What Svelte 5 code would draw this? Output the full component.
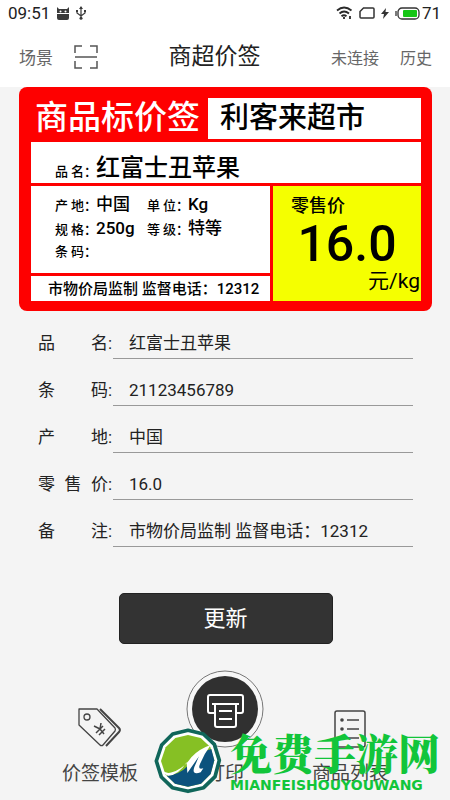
<script lang="ts">
  type Field = { id: string; label: string; value: string };

  let fields: Field[] = $state([
    { id: "name", label: "品名", value: "红富士丑苹果" },
    { id: "barcode", label: "条码", value: "21123456789" },
    { id: "origin", label: "产地", value: "中国" },
    { id: "price", label: "零售价", value: "16.0" },
    { id: "remark", label: "备注", value: "市物价局监制 监督电话：12312" },
  ]);

  const details = [
    { label: "产地", value: "中国" },
    { label: "单位", value: "Kg" },
    { label: "规格", value: "250g" },
    { label: "等级", value: "特等" },
    { label: "条码", value: "" },
  ];
</script>

<div class="page">
  <div class="status-bar">
    <div class="status-group">
      <span class="clock">09:51</span>
      <svg width="14" height="13" viewBox="0 0 14 13" aria-hidden="true">
        <path d="M1 0l2 2h8l2-2v6H1zM1 7h12v4a2 2 0 0 1-2 2H3a2 2 0 0 1-2-2z" fill="#3a3a3a" />
        <circle cx="4.5" cy="4.5" r="1" fill="#fff" />
        <circle cx="9.5" cy="4.5" r="1" fill="#fff" />
      </svg>
      <svg width="10" height="14" viewBox="0 0 10 14" fill="none" stroke="#3a3a3a" aria-hidden="true">
        <path d="M5 1v11M1 5v2l4 3 4-3V5" stroke-width="1.2" />
        <path d="M5 0l2 3H3zM0 4h2v2H0zM8 4h2v2H8z" fill="#3a3a3a" stroke="none" />
        <circle cx="5" cy="12.3" r="1.5" fill="#3a3a3a" stroke="none" />
      </svg>
    </div>
    <div class="status-group">
      <svg width="17" height="14" viewBox="0 0 17 14" fill="none" stroke="#2a2a2a" stroke-width="1.8" aria-hidden="true">
        <path d="M1 4.5Q8 -1.5 15.5 4.5M3.5 7.5Q8 3.5 13 7.5M5.5 10.2Q8 8.2 10.5 10.2" />
        <path d="M8 11v2M14 10v3" />
      </svg>
      <svg width="16" height="12" viewBox="0 0 16 12" fill="none" stroke="#333" stroke-width="1.5" aria-hidden="true">
        <path d="M4.5 1H14q1 0 1 1v8q0 1-1 1H2q-1 0-1-1V4.5z" />
      </svg>
      <svg width="8" height="11" viewBox="0 0 8 11" aria-hidden="true">
        <path d="M5 0L0 6h3L2 11l6-7H4.5z" fill="#333" />
      </svg>
      <svg width="25" height="13" viewBox="0 0 25 13" aria-hidden="true">
        <rect x="3" y="1" width="21" height="11" rx="4" fill="none" stroke="#333" stroke-width="1.3" />
        <path d="M1 4v5" stroke="#333" stroke-width="1.3" />
        <rect x="8" y="3" width="14" height="7" rx="1" fill="#16c616" />
      </svg>
      <span class="battery">71</span>
    </div>
  </div>

  <header class="app-bar">
    <div class="bar-side">
      <a class="bar-link" href="#scene">场景</a>
      <button class="scan" type="button" aria-label="扫一扫">
        <svg width="24" height="24" viewBox="0 0 24 24" fill="none" stroke="#555" stroke-width="1.5" aria-hidden="true">
          <path d="M1 8V1h7M16 1h7v7M1 16v7h7M16 23h7v-7M1 12h22" />
        </svg>
      </button>
    </div>
    <h1>商超价签</h1>
    <div class="bar-side">
      <a class="bar-link small" href="#device">未连接</a>
      <a class="bar-link small" href="#history">历史</a>
    </div>
  </header>

  <main>
    <section class="tag">
      <div class="tag-head">
        <h2>商品标价签</h2>
        <p class="store">利客来超市</p>
      </div>
      <div class="tag-name">
        <span class="key">品名</span><span class="colon">：</span><strong>红富士丑苹果</strong>
      </div>
      <div class="tag-body">
        <div class="tag-left">
          <div class="tag-details">
            {#each details as item}
              <div class="detail">
                <span class="key">{item.label}</span><span class="colon">：</span><span class="val">{item.value}</span>
              </div>
            {/each}
          </div>
          <p class="tag-foot">市物价局监制 监督电话：12312</p>
        </div>
        <div class="tag-price">
          <p class="price-title">零售价</p>
          <p class="price">16.0</p>
          <p class="unit">元/kg</p>
        </div>
      </div>
    </section>

    <form class="fields">
      {#each fields as field (field.id)}
        <div class="field">
          <label for={field.id}>{field.label}</label>
          <span>:</span>
          <input id={field.id} type="text" bind:value={field.value} />
        </div>
      {/each}
      <button class="update" type="button">更新</button>
    </form>
  </main>

  <nav class="tabs">
    <a class="tab" href="#templates">
      <svg width="44" height="40" viewBox="0 0 44 40" fill="none" stroke="#444" stroke-width="1.3" stroke-linejoin="round" aria-hidden="true">
        <path d="M1 1h18l18 19a3 3 0 0 1 0 3L25 37a2 2 0 0 1-3 0L1 17z" />
        <path d="M22 1l19 19a3 3 0 0 1 0 4L28 38" stroke-width="2" />
        <circle cx="9" cy="9" r="3" />
        <path d="M16 18l6 3 1-6M22 21l4 5M18 25l7-7M21 27l6-6" stroke-width="1.5" />
      </svg>
      <span>价签模板</span>
    </a>
    <a class="tab" href="#print">
      <svg width="78" height="78" viewBox="0 0 78 78" fill="none" aria-hidden="true">
        <circle cx="39" cy="39" r="38" stroke="#777" fill="#f7f7f7" />
        <circle cx="39" cy="39" r="33" fill="#303030" />
        <g stroke="#fff" stroke-width="2" stroke-linejoin="round">
          <path d="M28 43h-4q-2 0-2-2V27q0-2 2-2h31q2 0 2 2v14q0 2-2 2h-4" />
          <path d="M26 34h27M29 34v21q0 2 2 2h17q2 0 2-2V34M33 41h13M33 49h13" />
        </g>
      </svg>
      <span>打印</span>
    </a>
    <a class="tab" href="#goods">
      <svg width="32" height="38" viewBox="0 0 32 38" fill="none" stroke="#444" stroke-width="1.5" aria-hidden="true">
        <rect x="1" y="1" width="30" height="36" rx="2" />
        <path d="M13 10h12M13 19h12M13 28h12" />
        <g fill="#444" stroke="none">
          <circle cx="8" cy="10" r="1.8" />
          <circle cx="8" cy="19" r="1.8" />
          <circle cx="8" cy="28" r="1.8" />
        </g>
      </svg>
      <span>商品列表</span>
    </a>

    <div class="watermark">
      <svg width="72" height="68" viewBox="0 0 216 204" aria-hidden="true">
        <path
          d="M108 10L154 21 187 52 202 100 189 149 155 182 108 193 61 182 28 150 13 102 29 54 62 21z"
          fill="#fff" stroke="#10665a" stroke-width="11" stroke-linejoin="round"
        />
        <path d="M108 24L146 33 175 60 187 100 176 141 147 170 108 179 69 170 40 142 27 102 41 61 70 33z" fill="#86c024" />
        <path d="M178 66L187 100 176 141 147 170 108 179 69 170 44 146Q82 144 106 118L160 72z" fill="#0c527d" />
        <path
          d="M31 130Q42 142 60 136Q95 125 118 91Q140 66 176 54Q158 78 144 111Q136 130 154 124L146 136Q118 146 127 120L141 88L106 138L104 106Q78 146 49 146Q34 143 31 130z"
          fill="#fff"
        />
      </svg>
      <div class="watermark-text">
        <p class="wm-name">免费手游网</p>
        <p class="wm-site">MIANFEISHOUYOUWANG</p>
      </div>
    </div>
  </nav>
</div>

<style>
  :global(body) {
    background: #f4f4f4;
  }

  .page {
    min-height: 100vh;
    display: flex;
    flex-direction: column;
    overflow: hidden;
    font-family: Roboto, "Noto Sans CJK SC", sans-serif;
    color: #222;
  }

  h1,
  h2,
  p {
    margin: 0;
  }

  a {
    color: inherit;
    text-decoration: none;
  }

  svg {
    display: block;
    flex-shrink: 0;
  }

  /* status bar */
  .status-bar {
    display: flex;
    justify-content: space-between;
    align-items: center;
    height: 26px;
    padding: 0 9px 0 8px;
    background: #fff;
  }

  .status-group {
    display: flex;
    align-items: center;
    gap: 6px;
  }

  .clock,
  .battery {
    font-size: 17px;
    line-height: 26px;
  }

  .battery {
    margin-left: -4px;
  }

  /* app bar */
  .app-bar {
    display: flex;
    justify-content: space-between;
    align-items: center;
    height: 61px;
    padding: 0 18px 0 19px;
    background: #fff;
  }

  .bar-side {
    display: flex;
    align-items: center;
    gap: 21px;
  }

  .bar-link {
    font-size: 17px;
    color: #666;
  }

  .bar-link.small {
    font-size: 16px;
  }

  .scan {
    padding: 0;
    border: none;
    background: none;
  }

  h1 {
    font-size: 23px;
    font-weight: 400;
    line-height: 32px;
  }

  /* price tag: the red background shows through the gaps as ruling lines */
  .tag {
    display: flex;
    flex-direction: column;
    gap: 3px;
    margin: 0 18px 0 19px;
    padding: 11px 11px 10px 12px;
    border-radius: 8px;
    background: #fe0000;
    color: #000;
  }

  .tag-head {
    display: flex;
    height: 41px;
    line-height: 40px;
  }

  h2 {
    padding: 0 8px 0 4px;
    font-size: 33px;
    font-weight: 500;
    color: #fff;
  }

  .store {
    flex: 1;
    padding-left: 12px;
    font-size: 29px;
    font-weight: 500;
    background: #fff;
  }

  .tag-name {
    display: flex;
    align-items: baseline;
    height: 41px;
    padding-left: 24px;
    line-height: 52px;
    background: #fff;
  }

  .tag-name strong {
    font-size: 24px;
    font-weight: 500;
  }

  .key {
    width: 29px;
    font-size: 13px;
    font-weight: 500;
    text-align-last: justify;
  }

  .colon {
    width: 12px;
    font-size: 13px;
    font-weight: 500;
  }

  .tag-body {
    display: flex;
    gap: 3px;
  }

  .tag-left {
    flex: 1;
    display: flex;
    flex-direction: column;
    gap: 3px;
  }

  .tag-details {
    flex: 1;
    display: grid;
    grid-template-columns: 92px 1fr;
    align-content: start;
    padding: 6px 0 9px 24px;
    background: #fff;
  }

  .detail {
    display: flex;
    align-items: baseline;
    height: 24px;
    line-height: 24px;
  }

  .val {
    font-size: 17px;
    font-weight: 500;
  }

  .tag-foot {
    padding: 2px 0 0 17px;
    font-size: 15px;
    font-weight: 500;
    line-height: 23px;
    background: #fff;
  }

  .tag-price {
    width: 148px;
    background: #f5ff00;
  }

  .price-title {
    padding: 8px 0 0 18px;
    font-size: 18px;
    font-weight: 500;
    line-height: 24px;
  }

  .price {
    font-size: 50px;
    font-weight: 500;
    line-height: 52px;
    text-align: center;
  }

  .unit {
    padding-right: 1px;
    font-size: 21px;
    line-height: 22px;
    text-align: right;
  }

  /* form */
  .fields {
    display: flex;
    flex-direction: column;
    padding: 1px 37px 0 38px;
  }

  .field {
    display: flex;
    align-items: flex-end;
    height: 47px;
    font-size: 17px;
    line-height: 32px;
  }

  .field label {
    width: 70px;
    text-align-last: justify;
  }

  .field span {
    width: 5px;
  }

  .field input {
    flex: 1;
    min-width: 0;
    height: 32px;
    box-sizing: border-box;
    padding: 0 0 0 16px;
    border: none;
    border-bottom: 1px solid #999;
    border-radius: 0;
    background: none;
    font: inherit;
    color: #222;
  }

  .update {
    align-self: center;
    width: 214px;
    height: 51px;
    margin-top: 46px;
    padding: 0 0 5px;
    border: 1px solid #222;
    border-radius: 5px;
    background: #333;
    font: inherit;
    font-size: 22px;
    color: #fff;
  }

  /* bottom tabs */
  .tabs {
    position: relative;
    display: grid;
    grid-template-columns: repeat(3, 125px);
    justify-content: center;
    align-items: end;
    margin-top: auto;
    padding-bottom: 12px;
  }

  .tab {
    display: flex;
    flex-direction: column;
    align-items: center;
    gap: 12px;
    font-size: 19px;
    line-height: 28px;
    color: #444;
  }

  .watermark {
    position: absolute;
    left: 50%;
    bottom: 5px;
    display: flex;
    gap: 6px;
    margin-left: -73px;
  }

  .watermark-text {
    color: #12c53a;
    white-space: nowrap;
  }

  .wm-name {
    font-family: "Noto Serif CJK SC", "Noto Sans CJK SC", serif;
    font-size: 42px;
    font-weight: 900;
    line-height: 50px;
  }

  .wm-site {
    font-family: "DejaVu Sans", sans-serif;
    font-size: 14px;
    font-weight: 700;
    line-height: 16px;
  }
</style>
